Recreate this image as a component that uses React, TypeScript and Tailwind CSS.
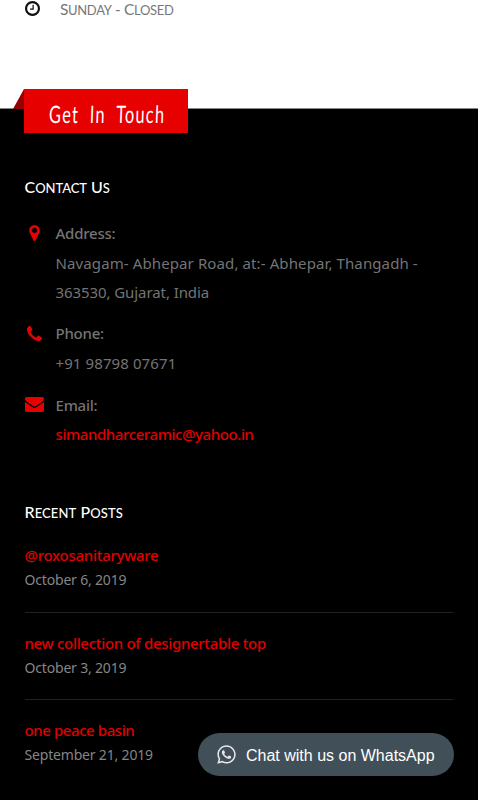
import type { ReactNode } from "react";
import { FaWhatsapp } from "react-icons/fa";

const ClockIcon = () => (
  <svg viewBox="0 128 1536 1536" className="size-[15px]" fill="currentColor">
    <path d="M896 544v448q0 14-9 23t-23 9h-320q-14 0-23-9t-9-23v-64q0-14 9-23t23-9h224v-352q0-14 9-23t23-9h64q14 0 23 9t9 23zm416 352q0-148-73-273t-198-198-273-73-273 73-198 198-73 273 73 273 198 198 273 73 273-73 198-198 73-273zm224 0q0 209-103 385.5t-279.5 279.5-385.5 103-385.5-103-279.5-279.5-103-385.5 103-385.5 279.5-279.5 385.5-103 385.5 103 279.5 279.5 103 385.5z" />
  </svg>
);

const PinIcon = () => (
  <svg viewBox="0 0 1024 1536" className="h-4 w-[11px]" fill="currentColor">
    <path d="M768 512q0-106-75-181t-181-75-181 75-75 181 75 181 181 75 181-75 75-181zm256 0q0 109-33 179l-364 774q-16 33-47.5 52t-67.5 19-67.5-19-46.5-52l-365-774q-33-70-33-179 0-212 150-362t362-150 362 150 150 362z" />
  </svg>
);

const PhoneIcon = () => (
  <svg viewBox="0 0 1408 1408" className="size-[15px]" fill="currentColor">
    <path d="M1408 1112q0 27-10 70.5t-21 68.5q-21 50-122 106-94 51-186 51-27 0-53-3.5t-57.5-12.5-47-14.5-55.5-20.5-49-18q-98-35-175-83-127-79-264-216t-216-264q-48-77-83-175-3-9-18-49t-20.5-55.5-14.5-47-12.5-57.5-3.5-53q0-92 51-186 56-101 106-122 25-11 68.5-21t70.5-10q14 0 21 3 18 6 53 76 11 19 30 54t35 63.5 31 53.5q3 4 17.5 25t21.5 35.5 7 28.5q0 20-28.5 50t-62 55-62 53-28.5 46q0 9 5 22.5t8.5 20.5 14 24 11.5 19q76 137 174 235t235 174q2 1 19 11.5t24 14 20.5 8.5 22.5 5q18 0 46-28.5t53-62 55-62 50-28.5q14 0 28.5 7t35.5 21.5 25 17.5q25 15 53.5 31t63.5 35 54 30q70 35 76 53 3 7 3 21z" />
  </svg>
);

const MailIcon = () => (
  <svg viewBox="0 256 1792 1408" className="h-[15px] w-[19px]" fill="currentColor">
    <path d="M1792 710v794q0 66-47 113t-113 47h-1472q-66 0-113-47t-47-113v-794q44 49 101 87 362 246 497 345 57 42 92.5 65.5t94.5 48 110 24.5h2q51 0 110-24.5t94.5-48 92.5-65.5q170-123 498-345 57-39 100-87zm0-294q0 79-49 151t-122 123q-376 261-468 325-10 7-42.5 31t-54 38.5-52 32.5-57.5 27-50 9h-2q-23 0-50-9t-57.5-27-52-32.5-54-38.5-42.5-31q-91-64-262-182.5t-205-142.5q-62-42-117-115.5t-55-136.5q0-78 41.5-130t118.5-52h1472q65 0 112.5 47t47.5 113z" />
  </svg>
);

function Contact({ icon, label, children }: { icon: ReactNode; label: string; children: ReactNode }) {
  return (
    <li className="flex">
      <span className="flex h-7 w-5 items-center justify-center text-[#e60000]">{icon}</span>
      <div className="ml-[11px] text-[15px] leading-[29.7px] whitespace-nowrap text-[#747474]">
        <p className="font-medium tracking-[-0.23px]">{label}</p>
        {children}
      </div>
    </li>
  );
}

function Post({ title, date }: { title: ReactNode; date: ReactNode }) {
  return (
    <li className="h-[87px] border-b border-[#222] pt-[18px] whitespace-nowrap first:h-[70px] first:pt-0 last:border-0">
      <p className="text-[15px] leading-6 font-medium text-[#e00000]">{title}</p>
      <p className="text-[14px] leading-[26px] tracking-[-0.18px] text-[#858585]">{date}</p>
    </li>
  );
}

export default function App() {
  return (
    <div className="relative h-[800px] overflow-hidden bg-white font-['Noto_Sans',sans-serif]">
      <div className="flex h-[108px] pl-[25px]">
        <span className="mt-px text-[#111]"><ClockIcon /></span>
        <p className="ml-[20px] font-['Lato',sans-serif] text-[15.5px] leading-[19px] tracking-[-0.35px] text-[#777]">
          S<span className="text-[13px]">UNDAY</span> - C<span className="text-[13px]">LOSED</span>
        </p>
      </div>

      <footer className="flow-root h-[692px] border-t border-[#888] bg-black pr-[25px] pl-[24.5px]">
        <div className="relative -mt-5 -ml-[0.5px] h-11 w-[164px] bg-[#e60000]">
          <span className="absolute top-0 right-full h-5 w-[11px] bg-[#970000] [clip-path:polygon(100%_0,100%_100%,0_100%)]" />
          <h2 className="origin-left scale-x-[.68] -skew-x-3 pl-[37px] font-['Lato',sans-serif] text-[24px] leading-[50px] tracking-[1.8px] whitespace-nowrap text-white [word-spacing:8px]">Get In Touch</h2>
        </div>

        <h3 className="mt-[42px] font-['Lato',sans-serif] text-[16px] leading-6 font-medium tracking-[-0.05px] text-white">
          C<span className="text-[13px]">ONTACT</span> U<span className="text-[13px]">S</span>
        </h3>
        <ul className="mt-[19px] flex flex-col gap-[12px]">
          <Contact icon={<PinIcon />} label="Address:">
            <p className="tracking-[0.11px]">Navagam- Abhepar Road, at:- Abhepar, Thangadh -</p>
            <p className="-mb-px tracking-[-0.08px]">363530, Gujarat, India</p>
          </Contact>
          <Contact icon={<PhoneIcon />} label="Phone:"><p className="tracking-[0.1px]">+91 98798 07671</p></Contact>
          <Contact icon={<MailIcon />} label="Email:">
            <p className="font-medium tracking-[-0.41px] text-[#e00000]">simandharceramic@yahoo.in</p>
          </Contact>
        </ul>

        <h3 className="mt-[50px] font-['Lato',sans-serif] text-[16px] leading-6 font-medium tracking-[0.1px] text-white">
          R<span className="text-[13px]">ECENT</span> P<span className="text-[13px]">OSTS</span>
        </h3>
        <ul className="mt-[18px]">
          <Post title={<span className="tracking-[-0.28px]">@roxosanitaryware</span>} date="October 6, 2019" />
          <Post title={<span className="tracking-[-0.31px]">new collection of designertable top</span>} date="October 3, 2019" />
          <Post title={<span className="tracking-[-0.42px]">one peace basin</span>} date="September 21, 2019" />
        </ul>
      </footer>

      <button className="absolute top-[733px] left-[198px] flex h-[43px] w-[256px] items-center rounded-full bg-[#414f59] pl-[18px] font-['Liberation_Sans',Arial,sans-serif] text-[16px] whitespace-nowrap text-white">
        <FaWhatsapp className="mr-[9px] size-[21px] text-[#e5e7e9]" />
        <span className="pt-0.5">Chat with us on WhatsApp</span>
      </button>
    </div>
  );
}
